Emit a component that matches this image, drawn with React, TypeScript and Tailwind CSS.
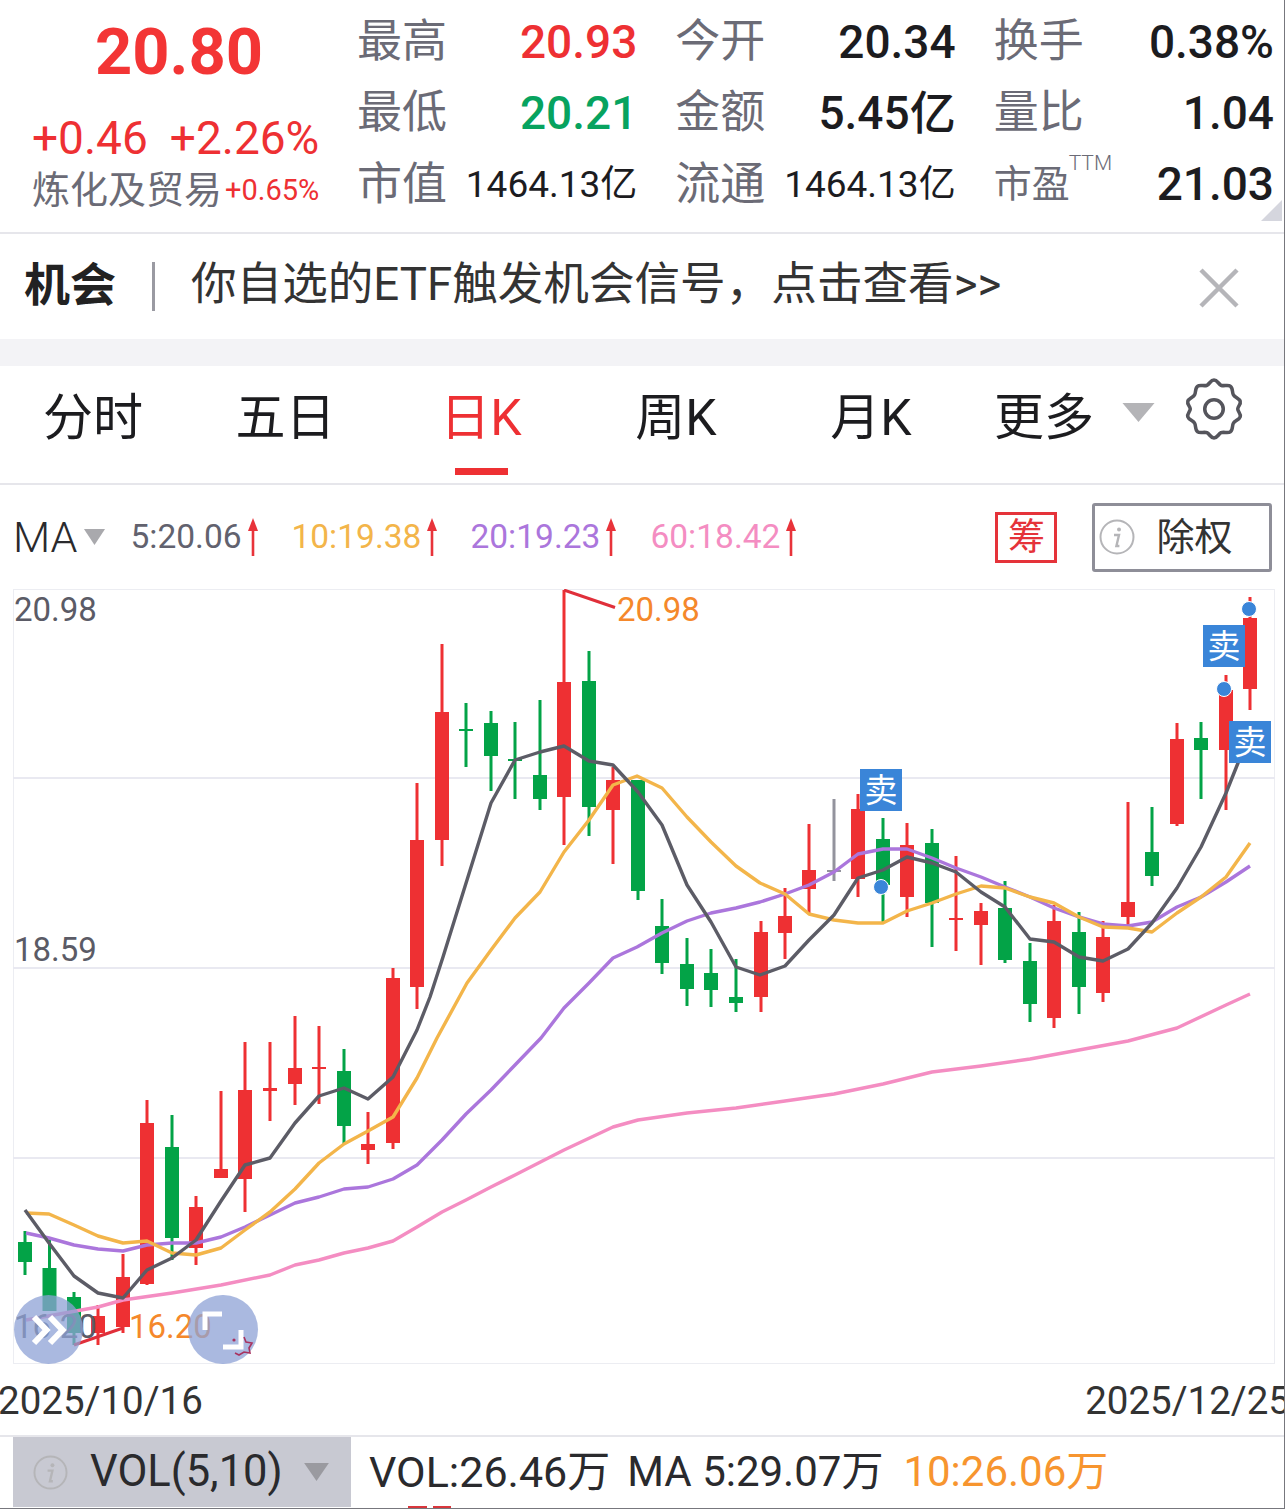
import React from 'react';

const CANDLES: [number, number, number, number, number, string][] = [
  // x, wick top, wick bottom, body top, body bottom, colour key
  [25, 1231, 1275, 1242, 1262, 'g'], [49.5, 1240, 1311, 1268, 1311, 'g'], [74, 1292, 1345, 1297, 1333, 'g'],
  [98, 1305, 1345, 1316, 1333, 'r'], [123, 1254, 1333, 1277, 1327, 'r'], [147, 1100, 1285, 1123, 1284, 'r'],
  [172, 1115, 1260, 1147, 1238, 'g'], [196, 1196, 1265, 1207, 1248, 'r'], [221, 1091, 1178, 1169, 1178, 'r'],
  [245, 1042, 1212, 1090, 1179, 'r'], [270, 1042, 1121, 1088, 1091, 'r'], [295, 1016, 1105, 1068, 1084, 'r'],
  [319, 1026, 1104, 1067, 1069, 'r'], [344, 1049, 1144, 1071, 1126, 'g'], [368, 1112, 1164, 1144, 1150, 'r'],
  [393, 968, 1149, 978, 1143, 'r'], [417, 783, 1009, 840, 987, 'r'], [442, 644, 866, 712, 840, 'r'],
  [466, 703, 767, 729, 731, 'g'], [491, 711, 791, 723, 756, 'g'], [515, 722, 799, 759, 761, 'g'],
  [540, 700, 810, 775, 799, 'g'], [564, 590, 845, 682, 797, 'r'], [589, 651, 836, 681, 807, 'g'],
  [613, 767, 864, 780, 810, 'r'], [638, 780, 900, 780, 891, 'g'], [662, 899, 974, 926, 963, 'g'],
  [687, 938, 1006, 964, 989, 'g'], [711, 949, 1007, 973, 990, 'g'], [736, 959, 1012, 997, 1003, 'g'],
  [761, 921, 1012, 932, 997, 'r'], [785, 888, 959, 916, 933, 'r'], [809, 824, 913, 870, 889, 'r'],
  [834, 799, 881, 870, 872, 'n'], [858, 794, 897, 809, 879, 'r'], [883, 818, 922, 839, 885, 'g'],
  [907, 823, 917, 845, 897, 'r'], [932, 829, 947, 843, 903, 'g'], [956, 856, 951, 918, 920, 'r'],
  [981, 903, 965, 911, 925, 'r'], [1005, 881, 963, 908, 960, 'g'], [1030, 943, 1022, 961, 1004, 'g'],
  [1054, 905, 1028, 921, 1018, 'r'], [1079, 912, 1014, 932, 987, 'g'], [1103, 921, 1002, 937, 993, 'r'],
  [1128, 802, 925, 902, 917, 'r'], [1152, 807, 886, 852, 876, 'g'], [1177, 723, 826, 739, 824, 'r'],
  [1201, 722, 799, 738, 750, 'g'], [1226, 675, 810, 690, 750, 'r'], [1250, 597, 710, 618, 689, 'r'],
];

const COLORS: Record<string, string> = { r: '#ee3033', g: '#03a347', n: '#93939d' };

const MA5 =
  '25,1210 49,1243 74,1276 98,1293 123,1298 147,1270 172,1258 196,1240 221,1201 245,1165 270,1158 295,1123 319,1096 344,1088 368,1099 393,1077 417,1030 430,997 443,957 467,880 491,803 515,760 540,752 564,746 589,761 613,765 638,792 662,825 687,885 711,922 736,967 760,975 785,966 809,940 834,915 858,878 883,870 907,857 932,863 956,872 981,892 1005,907 1030,939 1054,942 1079,957 1103,961 1128,949 1152,923 1177,888 1201,847 1226,793 1238,763 1250,733';
const MA10 =
  '26,1213 49,1214 74,1225 98,1236 123,1243 147,1241 172,1253 196,1255 221,1248 245,1230 270,1212 295,1189 319,1163 344,1144 368,1131 393,1117 417,1078 437,1038 467,983 491,950 515,918 540,892 564,852 589,820 613,785 637,776 662,788 687,817 711,842 736,866 760,883 785,894 809,914 834,920 858,923 883,923 907,911 932,903 956,894 981,886 1005,888 1030,897 1054,903 1079,917 1103,927 1128,928 1152,932 1177,913 1201,897 1226,877 1250,843';
const MA20 =
  '26,1233 49,1238 74,1245 98,1249 123,1251 147,1245 172,1243 196,1243 221,1237 245,1227 270,1215 295,1203 319,1197 344,1189 368,1187 393,1179 417,1165 442,1140 466,1114 491,1090 515,1065 541,1038 564,1008 589,983 613,958 637,947 662,933 687,921 711,913 736,908 760,902 785,894 809,885 834,872 858,854 883,849 907,849 932,858 956,868 981,877 1005,887 1030,897 1054,908 1079,917 1103,924 1128,926 1152,922 1177,907 1201,897 1226,882 1250,866';
const MA60 =
  '26,1320 98,1307 123,1300 172,1293 221,1285 270,1275 295,1265 319,1260 344,1253 368,1248 393,1241 417,1227 442,1212 466,1200 491,1187 515,1175 564,1150 613,1127 638,1120 687,1113 736,1108 785,1101 834,1094 883,1084 932,1072 981,1066 1030,1059 1079,1050 1128,1041 1177,1028 1226,1005 1250,994';

const CN = 'font-["Roboto","Noto_Sans_CJK_SC",sans-serif]';

const stats = [
  { label: '最高', value: '20.93', tone: 'text-[#ee3033]', size: 'text-[46px] font-medium' },
  { label: '今开', value: '20.34', tone: 'text-[#1c1c1f]', size: 'text-[46px] font-medium' },
  { label: '换手', value: '0.38%', tone: 'text-[#1c1c1f]', size: 'text-[46px] font-medium' },
  { label: '最低', value: '20.21', tone: 'text-[#07a35f]', size: 'text-[46px] font-medium' },
  { label: '金额', value: '5.45亿', tone: 'text-[#1c1c1f]', size: 'text-[46px] font-medium' },
  { label: '量比', value: '1.04', tone: 'text-[#1c1c1f]', size: 'text-[46px] font-medium' },
  { label: '市值', value: '1464.13亿', tone: 'text-[#1c1c1f]', size: 'text-[37px]' },
  { label: '流通', value: '1464.13亿', tone: 'text-[#1c1c1f]', size: 'text-[37px]' },
];

const tabs = [
  { label: '分时', width: 'w-[186px]' },
  { label: '五日', width: 'w-[199px]' },
  { label: '日K', width: 'w-[192px]', active: true },
  { label: '周K', width: 'w-[198px]' },
  { label: '月K', width: 'w-[192px]' },
];

const maItems = [
  { text: '5:20.06', tone: 'text-[#62626e]', width: 'w-[161px]' },
  { text: '10:19.38', tone: 'text-[#f3b54a]', width: 'w-[179px]' },
  { text: '20:19.23', tone: 'text-[#ab76dc]', width: 'w-[180px]' },
  { text: '60:18.42', tone: 'text-[#f48dc2]', width: 'w-[160px]' },
];

const InfoIcon = ({ className }: { className: string }) => (
  <svg viewBox="0 0 36 36" className={className}>
    <circle cx="18" cy="18" r="16.5" fill="none" stroke="#b5b5b8" strokeWidth="2" />
    <circle cx="20" cy="10.5" r="2" fill="#b5b5b8" />
    <path d="M15 16h5l-2.6 11h3" fill="none" stroke="#b5b5b8" strokeWidth="2.4" />
  </svg>
);

const Caret = ({ className }: { className: string }) => (
  <svg viewBox="0 0 24 20" preserveAspectRatio="none" className={className}>
    <path d="M1 1h22L12 19z" fill="currentColor" />
  </svg>
);

const UpArrow = () => (
  <svg viewBox="0 0 10 38" className="ml-[6px] h-[38px] w-[10px]">
    <path d="M5 38V8" stroke="#e8333a" strokeWidth="2.6" />
    <path d="M5 0l5 13H0z" fill="#e8333a" />
  </svg>
);

const SellTag = ({ className }: { className: string }) => (
  <div className={`absolute flex h-[42px] w-[42px] items-center justify-center bg-[#3a85d8] text-[33px] leading-none text-white ${className}`}>
    卖
  </div>
);

const Chart = () => (
  <div className="relative mx-[13px] h-[775px] w-[1262px] border border-[#ecedf2]">
    {/* candles and lines, in page coordinates */}
    <svg viewBox="13 589 1262 775" className="absolute -left-px -top-px h-[775px] w-[1262px]">
      {[778, 968, 1158].map(y => (
        <path key={y} d={`M13 ${y}H1275`} stroke="#e9e9f1" strokeWidth="2" />
      ))}
      {CANDLES.map(([x, hi, lo, top, bottom, c]) => (
        <g key={x} fill={COLORS[c]}>
          <rect x={x - 1.5} y={hi} width="3" height={lo - hi} />
          <rect x={x - 7} y={top} width="14" height={bottom - top} />
        </g>
      ))}
      <path d="M564 590l51 17.5" fill="none" stroke="#e02f3a" strokeWidth="3" />
      <path d="M74 1345l49-17" fill="none" stroke="#e02f3a" strokeWidth="3" />
      <polyline points={MA60} fill="none" stroke="#f48dc2" strokeWidth="3.4" strokeLinejoin="round" />
      <polyline points={MA20} fill="none" stroke="#ab76dc" strokeWidth="3.4" strokeLinejoin="round" />
      <polyline points={MA10} fill="none" stroke="#f3b54a" strokeWidth="3.4" strokeLinejoin="round" />
      <polyline points={MA5} fill="none" stroke="#5c5c66" strokeWidth="3.4" strokeLinejoin="round" />
      <circle cx="881" cy="887" r="7.5" fill="#3a85d8" stroke="#fff" />
      <circle cx="1224" cy="689" r="7.5" fill="#3a85d8" stroke="#fff" />
      <circle cx="1249" cy="609" r="7.5" fill="#3a85d8" stroke="#fff" />
    </svg>

    <span className="absolute left-0 top-0 text-[33px] leading-[40px] text-[#5b5b66]">20.98</span>
    <span className="absolute left-0 top-[340px] text-[33px] leading-[40px] text-[#5b5b66]">18.59</span>
    <span className="absolute left-0 top-[717px] text-[33px] leading-[40px] text-[#5b5b66]">16.20</span>
    <span className="absolute left-[603px] top-0 text-[33px] leading-[40px] text-[#f5882b]">20.98</span>
    <span className="absolute left-[115px] top-[717px] text-[33px] leading-[40px] text-[#f5882b]">16.20</span>

    <SellTag className="left-[846px] top-[179px]" />
    <SellTag className="left-[1189px] top-[35px]" />
    <SellTag className="left-[1215px] top-[131px]" />

    {/* floating zoom buttons */}
    <div className="absolute left-0 top-[705px] flex h-[69px] w-[69px] items-center justify-center rounded-full bg-[#8ea2d6]/75">
      <svg viewBox="0 0 36 32" className="h-[32px] w-[36px]">
        <path d="M3 3l12.500 13L3 29M19 3l12.500 13L19 29" fill="none" stroke="#fff" strokeWidth="6" />
      </svg>
    </div>
    <div className="absolute left-[174px] top-[705px] h-[69px] w-[70px] rounded-full bg-[#8ea2d6]/75">
      <svg viewBox="0 0 70 69" className="h-[69px] w-[70px]">
        <path d="M34 19H17v16" fill="none" stroke="#fff" strokeWidth="5" />
        <path d="M35 52h18V35" fill="none" stroke="#fff" strokeWidth="5" />
        <path d="M56 42l2 5 6 1-3 5 1 5-6-1-5 3-4-2" fill="none" stroke="#a8325f" strokeWidth="1.6" />
        <circle cx="46" cy="45" r="1.6" fill="#a8325f" />
      </svg>
    </div>
  </div>
);

export default function App() {
  return (
    <div className={`relative h-[1509px] w-[1285px] overflow-hidden border-r border-b border-[#77777d] bg-white ${CN}`}>
      {/* quote header */}
      <div className="flex h-[234px] border-b-2 border-[#e6e6eb]">
        <div className="flex w-[357px] flex-col pl-[32px]">
          <div className="mt-[14px] w-[294px] text-center text-[65px] font-bold leading-[76px] text-[#f33535]">20.80</div>
          <div className="mt-[22px] flex gap-[22px] text-[46px] leading-[52px] text-[#ee3033]">
            <span>+0.46</span>
            <span>+2.26%</span>
          </div>
          <div className="mt-[3px] flex items-center">
            <span className="text-[38px] leading-[46px] text-[#6b6b76]">炼化及贸易</span>
            <span className="ml-[3px] text-[29px] leading-[46px] text-[#ee3033]">+0.65%</span>
          </div>
        </div>
        <div className="mt-[6px] grid h-[214px] w-[917px] grid-cols-3 grid-rows-3 gap-x-[38px]">
          {stats.map(s => (
            <div key={s.label} className="flex items-center justify-between">
              <span className="text-[45px] leading-none text-[#6b6b76]">{s.label}</span>
              <span className={`${s.size} ${s.tone} leading-none`}>{s.value}</span>
            </div>
          ))}
          <div className="flex items-center justify-between">
            <span className="relative text-[38px] leading-none text-[#6b6b76]">
              市盈
              <span className="absolute left-[75px] top-[-12px] text-[21px] font-light text-[#6b6b76]">TTM</span>
            </span>
            <span className="text-[46px] font-medium leading-none text-[#1c1c1f]">21.03</span>
          </div>
        </div>
      </div>
      <div className="absolute left-[1261px] top-[200px] h-0 w-0 border-b-[21px] border-l-[21px] border-b-[#d5d6de] border-l-transparent" />

      {/* opportunity banner */}
      <div className="flex h-[105px] items-center pl-[24px] pr-[45px]">
        <span className="mb-[3px] text-[46px] font-bold leading-none text-[#222]">机会</span>
        <span className="ml-[36px] h-[49px] w-[3px] bg-[#9a9aa2]" />
        <span className="mb-[3px] ml-[36px] flex-1 text-[45.6px] leading-none text-[#333]">你自选的ETF触发机会信号，点击查看&gt;&gt;</span>
        <svg viewBox="0 0 40 40" className="mt-[3px] h-[40px] w-[40px]">
          <path d="M2 2l36 36M38 2L2 38" stroke="#b5b5b9" strokeWidth="4.5" />
        </svg>
      </div>
      <div className="h-[27px] bg-[#f3f3f6]" />

      {/* period tabs */}
      <div className="relative flex h-[119px] items-center border-b-2 border-[#e6e6eb]">
        {tabs.map(t => (
          <div key={t.label} className={`relative flex h-full items-center justify-center ${t.width}`}>
            <span className={`mb-[13px] text-[50px] leading-none ${t.active ? 'text-[#ee3033]' : 'text-[#1c1c1f]'}`}>{t.label}</span>
            {t.active && <span className="absolute bottom-[8px] left-[70px] h-[7px] w-[53px] bg-[#ee3033]" />}
          </div>
        ))}
        <span className="mb-[13px] ml-[27px] text-[50px] leading-none text-[#1c1c1f]">更多</span>
        <Caret className="mb-[24px] ml-[27px] h-[21px] w-[35px] text-[#b4b4b7] blur-[0.5px]" />
        <svg viewBox="0 0 24 24" className="absolute left-[1177px] top-[6px] h-[74px] w-[74px]" fill="none" stroke="#55555c" strokeWidth="1.15">
          <path d="M12 2.6c1.1 0 1.400 1.300 2.300 1.700.9.400 2.200-.300 3 .300.900.600.500 2 1 2.800.500.900 1.900 1.100 2.200 2.100.300 1-.800 1.700-.800 2.500s1.100 1.500.800 2.500c-.300 1-1.700 1.200-2.200 2.100-.500.800-.100 2.200-1 2.800-.800.600-2.100-.100-3 .300-.900.400-1.200 1.700-2.300 1.700s-1.400-1.300-2.300-1.700c-.900-.400-2.200.300-3-.300-.900-.600-.500-2-1-2.800-.500-.900-1.900-1.100-2.200-2.100-.300-1 .800-1.700.800-2.500s-1.100-1.500-.800-2.500c.300-1 1.700-1.200 2.200-2.100.500-.800.100-2.200 1-2.800.800-.600 2.100.100 3-.300.900-.400 1.200-1.700 2.300-1.700z" />
          <circle cx="12" cy="12" r="3" />
        </svg>
      </div>

      {/* moving average legend */}
      <div className="flex h-[104px] items-center pl-[13px]">
        <span className="text-[43px] font-light leading-none text-[#2a2a2d]">MA</span>
        <Caret className="ml-[6px] mr-[24px] h-[18px] w-[23px] text-[#a9a9ad] blur-[0.5px]" />
        {maItems.map(m => (
          <div key={m.text} className={`flex items-center ${m.width}`}>
            <span className={`text-[33.5px] leading-none ${m.tone}`}>{m.text}</span>
            <UpArrow />
          </div>
        ))}
        <div className="ml-[185px] flex h-[51px] w-[62px] items-center justify-center border-[3px] border-[#e5333a] text-[37px] leading-none text-[#e5333a]">筹</div>
        <div className="ml-[35px] flex h-[69px] w-[180px] items-center rounded-[3px] border-[3px] border-[#8e8e98] pl-[4px]">
          <InfoIcon className="h-[36px] w-[36px]" />
          <span className="ml-[21px] text-[38px] leading-none text-[#333]">除权</span>
        </div>
      </div>

      <Chart />

      {/* date axis */}
      <div className="flex h-[71px] items-center justify-between pt-[3px] text-[38.5px] leading-none text-[#333]">
        <span className="-ml-[2px]">2025/10/16</span>
        <span className="-mr-[6px] whitespace-nowrap">2025/12/25</span>
      </div>

      {/* volume strip */}
      <div className="flex h-[72px] items-center border-t-2 border-[#e6e6eb]">
        <div className="ml-[13px] flex h-full w-[338px] items-center bg-[#c8c9d2] pl-[20px]">
          <InfoIcon className="h-[35px] w-[35px]" />
          <span className="ml-[22px] text-[43.5px] leading-none text-[#2a2a2d]">VOL(5,10)</span>
          <Caret className="ml-[20px] h-[20px] w-[27px] text-[#9a9aa0] blur-[0.5px]" />
        </div>
        <span className="ml-[18px] text-[43px] leading-none text-[#2a2a2d]">VOL:26.46万</span>
        <span className="ml-[17px] text-[42px] leading-none text-[#2a2a2d]">MA 5:29.07万</span>
        <span className="ml-[20px] text-[42px] leading-none text-[#f7952f]">10:26.06万</span>
      </div>

      {/* tops of the next row, cut off at the bottom edge */}
      <div className="absolute bottom-0 left-[408px] flex gap-[6px]">
        <span className="h-[2px] w-[19px] bg-[#d9363c]" />
        <span className="h-[2px] w-[18px] bg-[#d9363c]" />
      </div>
    </div>
  );
}
